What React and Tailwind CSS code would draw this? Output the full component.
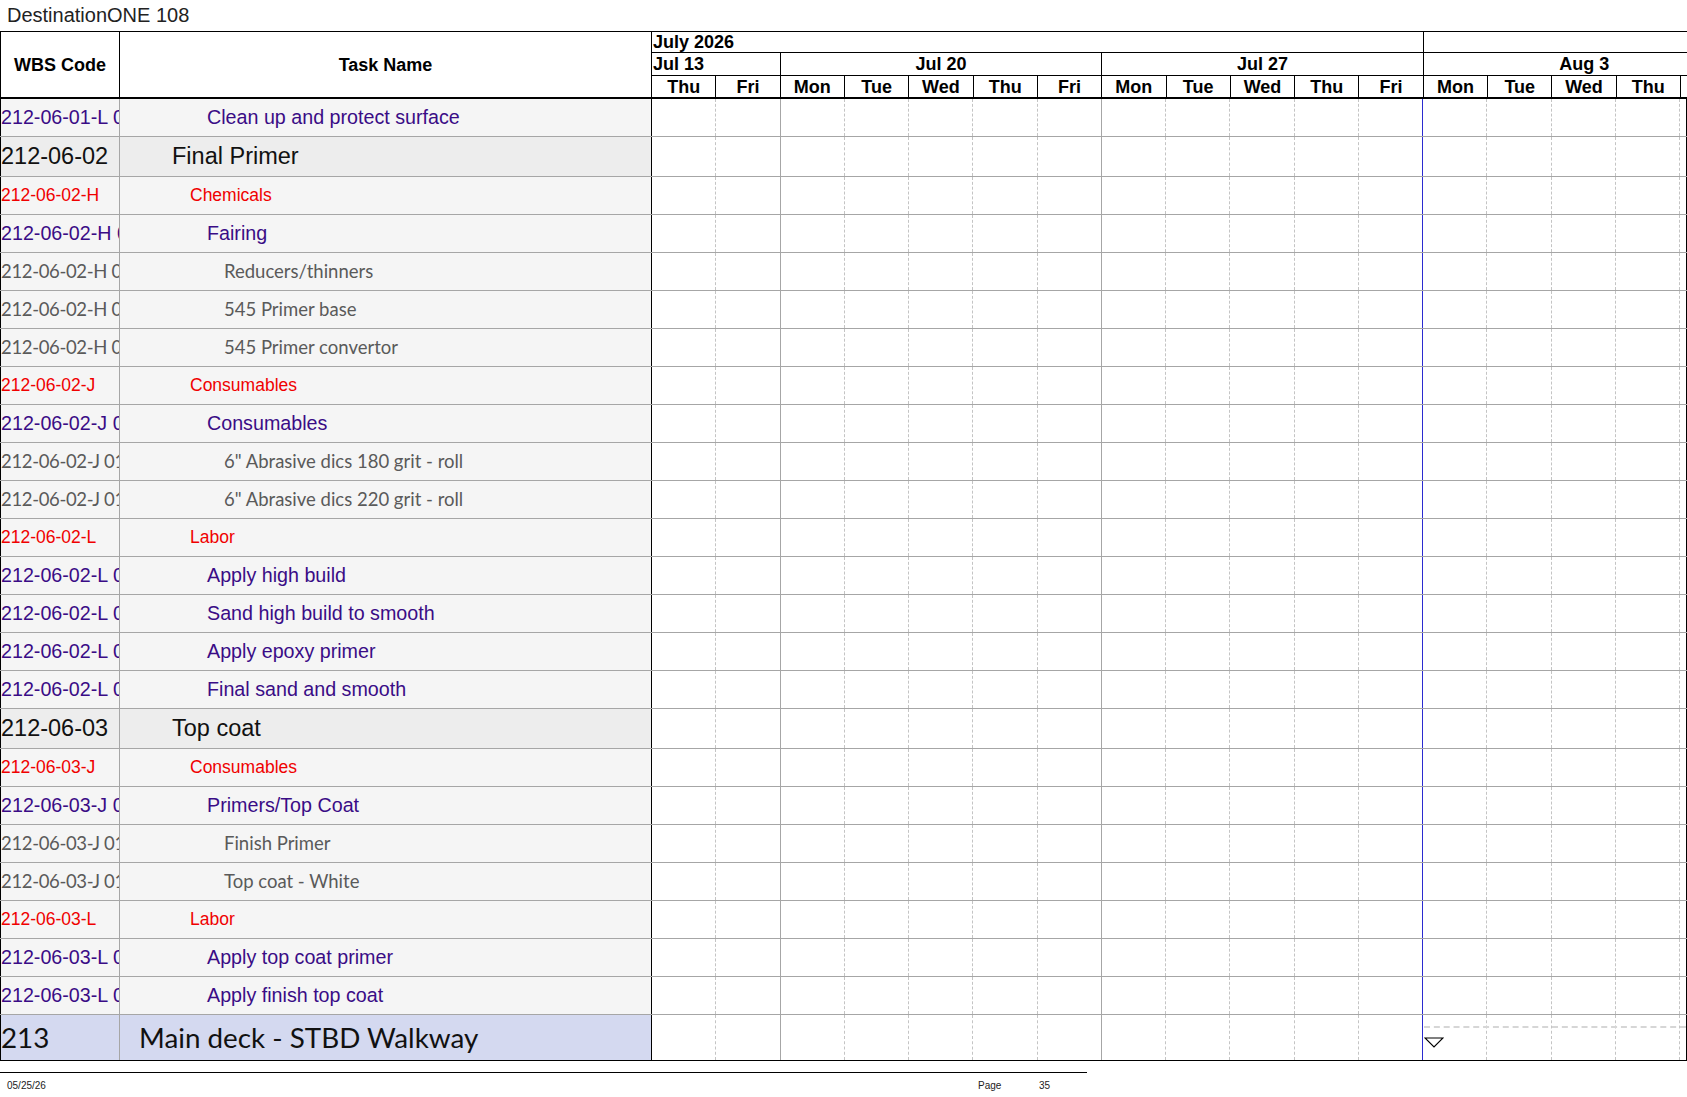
import React from 'react';

const GRID = 'grid grid-cols-[repeat(16,minmax(0,1fr))_6px]';
const DAYS = ['Thu', 'Fri', 'Mon', 'Tue', 'Wed', 'Thu', 'Fri', 'Mon', 'Tue', 'Wed', 'Thu', 'Fri', 'Mon', 'Tue', 'Wed', 'Thu'];

const rows = [
  { kind: 'task', wbs: '212-06-01-L 01', name: 'Clean up and protect surface' },
  { kind: 'sum', wbs: '212-06-02', name: 'Final Primer' },
  { kind: 'cat', wbs: '212-06-02-H', name: 'Chemicals' },
  { kind: 'task', wbs: '212-06-02-H 01', name: 'Fairing' },
  { kind: 'item', wbs: '212-06-02-H 01.01', name: 'Reducers/thinners' },
  { kind: 'item', wbs: '212-06-02-H 01.02', name: '545 Primer base' },
  { kind: 'item', wbs: '212-06-02-H 01.03', name: '545 Primer convertor' },
  { kind: 'cat', wbs: '212-06-02-J', name: 'Consumables' },
  { kind: 'task', wbs: '212-06-02-J 01', name: 'Consumables' },
  { kind: 'item', wbs: '212-06-02-J 01.01', name: '6" Abrasive dics 180 grit - roll' },
  { kind: 'item', wbs: '212-06-02-J 01.02', name: '6" Abrasive dics 220 grit - roll' },
  { kind: 'cat', wbs: '212-06-02-L', name: 'Labor' },
  { kind: 'task', wbs: '212-06-02-L 01', name: 'Apply high build' },
  { kind: 'task', wbs: '212-06-02-L 02', name: 'Sand high build to smooth' },
  { kind: 'task', wbs: '212-06-02-L 03', name: 'Apply epoxy primer' },
  { kind: 'task', wbs: '212-06-02-L 04', name: 'Final sand and smooth' },
  { kind: 'sum', wbs: '212-06-03', name: 'Top coat' },
  { kind: 'cat', wbs: '212-06-03-J', name: 'Consumables' },
  { kind: 'task', wbs: '212-06-03-J 01', name: 'Primers/Top Coat' },
  { kind: 'item', wbs: '212-06-03-J 01.01', name: 'Finish Primer' },
  { kind: 'item', wbs: '212-06-03-J 01.02', name: 'Top coat - White' },
  { kind: 'cat', wbs: '212-06-03-L', name: 'Labor' },
  { kind: 'task', wbs: '212-06-03-L 01', name: 'Apply top coat primer' },
  { kind: 'task', wbs: '212-06-03-L 02', name: 'Apply finish top coat' },
  { kind: 'top', wbs: '213', name: 'Main deck - STBD Walkway' },
];

const styles = {
  task: {
    h: 'h-[38px]',
    bg: 'bg-[#f5f5f5]',
    text: "font-['Liberation_Sans',Arial,sans-serif] text-[19.7px] text-[#3a0c86]",
    wbs: '',
    pl: 'pl-[87px]',
  },
  cat: {
    h: 'h-[38px]',
    bg: 'bg-[#f5f5f5]',
    text: "font-['Liberation_Sans',Arial,sans-serif] text-[17.5px] text-[#f00000]",
    wbs: '',
    pl: 'pl-[70px]',
  },
  item: {
    h: 'h-[38px]',
    bg: 'bg-[#f5f5f5]',
    text: "font-['Lato',sans-serif] text-[18.5px] text-[#5a5a5a]",
    wbs: 'tracking-[-0.35px]',
    pl: 'pl-[104px]',
  },
  sum: {
    h: 'h-[40px]',
    bg: 'bg-[#ededed]',
    text: "font-['Liberation_Sans',Arial,sans-serif] text-[23.5px] text-[#111]",
    wbs: '',
    pl: 'pl-[52px]',
  },
  top: {
    h: 'h-[45px]',
    bg: 'bg-[#d4d9f0]',
    text: "font-['Lato',sans-serif] text-[27.8px] text-[#111]",
    wbs: '',
    pl: 'pl-[19px]',
  },
};

function dayLine(i) {
  if (i === 1 || i === 6) return 'border-r border-solid border-[#a6a6a6]';
  if (i === 11) return 'border-r border-solid border-[#2b2bd0]';
  return 'border-r border-dashed border-[#c4c4c4]';
}

function Row({ r, last }) {
  const s = styles[r.kind];
  return (
    <div className={`flex ${s.h} ${last ? '' : 'border-b border-[#a6a6a6]'}`}>
      <div className={`w-[120px] shrink-0 flex items-center overflow-hidden whitespace-nowrap border-l border-l-black border-r border-r-[#a6a6a6] ${s.bg}`}>
        <span className={`leading-none ${s.text} ${s.wbs}`}>{r.wbs}</span>
      </div>
      <div className={`w-[532px] shrink-0 flex items-center whitespace-nowrap border-r border-r-black ${s.bg} ${s.pl}`}>
        <span className={`leading-none ${s.text}`}>{r.name}</span>
      </div>
      <div className={`relative w-[1035px] shrink-0 ${GRID} border-r border-r-black bg-white`}>
        {DAYS.map((d, i) => (
          <div key={i} className={dayLine(i)} />
        ))}
        <div />
        {r.kind === 'top' && (
          <>
            <div className="absolute left-[772px] right-0 top-[11px] border-t-2 border-dashed border-[#d6d6d6]" />
            <svg className="absolute left-[772px] top-[22px]" width="20" height="11" viewBox="0 0 20 11">
              <polygon points="1,1 19,1 10,10" fill="white" stroke="black" strokeWidth="1.2" />
            </svg>
          </>
        )}
      </div>
    </div>
  );
}

export default function App() {
  const head = "font-['Liberation_Sans',Arial,sans-serif] font-bold text-black leading-none";
  return (
    <div className="w-[1687px] h-[1097px] bg-white overflow-hidden">
      <div className="h-[31px] pl-[7px] pt-[3px]">
        <span className="font-['Liberation_Sans',Arial,sans-serif] text-[20px] leading-[24px] text-[#222]">DestinationONE 108</span>
      </div>

      <div className="border-b border-b-black">
        <div className="flex h-[68px] border-t border-t-black border-b-2 border-b-black">
          <div className={`w-[120px] shrink-0 flex items-center justify-center border-l border-l-black border-r border-r-black text-[18px] ${head}`}>
            WBS Code
          </div>
          <div className={`w-[532px] shrink-0 flex items-center justify-center border-r border-r-black text-[18px] ${head}`}>
            Task Name
          </div>
          <div className="w-[1035px] shrink-0 flex flex-col">
            <div className={`${GRID} h-[21px] border-b border-b-black`}>
              <div className={`col-span-12 flex items-center pl-[1px] border-r border-r-black text-[18px] ${head}`}>July 2026</div>
              <div className="col-span-5" />
            </div>
            <div className={`${GRID} h-[23px] border-b border-b-black`}>
              <div className={`col-span-2 flex items-center pl-[1px] border-r border-r-black text-[18px] ${head}`}>Jul 13</div>
              <div className={`col-span-5 flex items-center justify-center border-r border-r-black text-[18px] ${head}`}>Jul 20</div>
              <div className={`col-span-5 flex items-center justify-center border-r border-r-black text-[18px] ${head}`}>Jul 27</div>
              <div className={`col-span-5 flex items-center justify-center pl-[58px] text-[18px] ${head}`}>Aug 3</div>
            </div>
            <div className={`${GRID} flex-1`}>
              {DAYS.map((d, i) => (
                <div key={i} className={`flex items-center justify-center border-r border-r-black text-[18px] ${head}`}>
                  {d}
                </div>
              ))}
              <div />
            </div>
          </div>
        </div>

        {rows.map((r, i) => (
          <Row key={i} r={r} last={i === rows.length - 1} />
        ))}
      </div>

      <div className="mt-[11px] w-[1087px] border-t border-t-black" />
      <div className="flex pt-[8px] font-['Liberation_Sans',Arial,sans-serif] text-[10px] leading-none text-[#222]">
        <span className="ml-[7px] w-[971px]">05/25/26</span>
        <span className="w-[61px]">Page</span>
        <span>35</span>
      </div>
    </div>
  );
}
